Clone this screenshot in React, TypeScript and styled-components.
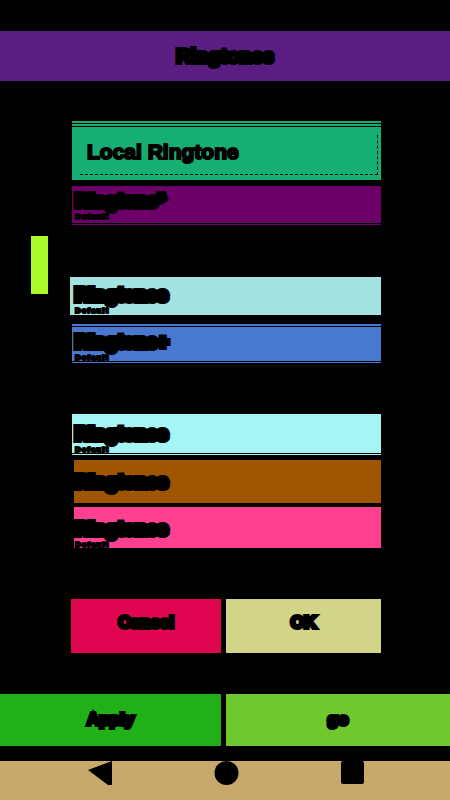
import styled, { createGlobalStyle } from 'styled-components';

const GlobalStyle = createGlobalStyle`
  html, body {
    margin: 0;
    padding: 0;
    background: #000;
  }
  body {
    font-family: 'Liberation Sans', Arial, sans-serif;
    color: #000;
  }
`;

const App = () => {
  return (
    <Page>
      <GlobalStyle />
      <Header>Ringtones</Header>

      <Body>
        <Rail>
          <RailThumb />
        </Rail>

        <Form>
          <HeroRow>Local Ringtone</HeroRow>
          <Row $bg="#6c0068" $height={37} $gap={54} $top={4} $lineBelow>
            <RowTitle>Ringtone*</RowTitle>
            <RowNote>Default</RowNote>
          </Row>

          <Row $bg="#a4e2e2" $height={38} $gap={12} $top={7} $left={-2}>
            <RowTitle>Ringtones</RowTitle>
            <RowNote>Default</RowNote>
          </Row>
          <Row $bg="#4878d0" $height={34} $gap={53} $top={4} $lineAbove $lineBelow>
            <RowTitle>Ringtone+</RowTitle>
            <RowNote>Default</RowNote>
          </Row>

          <Row $bg="#a5f5f5" $height={39} $gap={7} $top={9} $lineBelow>
            <RowTitle>Ringtones</RowTitle>
            <RowNote>Default</RowNote>
          </Row>
          <Row $bg="#a05500" $height={43} $gap={4} $top={11} $left={2}>
            <RowTitle>Ringtones</RowTitle>
          </Row>
          <Row $bg="#ff4091" $height={41} $gap={51} $top={11} $left={2}>
            <RowTitle>Ringtones</RowTitle>
            <RowNote>Default</RowNote>
          </Row>

          <ButtonRow>
            <ActionButton $bg="#df0550">Cancel</ActionButton>
            <ActionButton $bg="#d2d487">OK</ActionButton>
          </ButtonRow>
        </Form>
      </Body>

      <FooterRow>
        <FooterButton $bg="#20b018">Apply</FooterButton>
        <FooterButton $bg="#70c82e">go</FooterButton>
      </FooterRow>

      <NavBar>
        <svg width="24" height="24" viewBox="0 0 24 24">
          <path d="M0 9 L24 0 V24 L20 24 Z" fill="#000" />
        </svg>
        <svg width="25" height="24" viewBox="0 0 25 24">
          <circle cx="12.5" cy="12" r="12" fill="#000" />
        </svg>
        <svg width="23" height="23" viewBox="0 0 23 23">
          <rect width="23" height="23" rx="2" fill="#000" />
        </svg>
      </NavBar>
    </Page>
  );
};

export default App;

const Page = styled.div`
  width: 450px;
  height: 800px;
  padding-top: 31px;
  box-sizing: border-box;
  background: #000;
  overflow: hidden;
`;

const Header = styled.div`
  height: 50px;
  padding-top: 1px;
  box-sizing: border-box;
  background: #5a1e82;
  font-size: 20px;
  font-weight: 700;
  -webkit-text-stroke: 4px #000;
  display: flex;
  align-items: center;
  justify-content: center;
`;

const Body = styled.div`
  padding-top: 46px;
  display: flex;
`;

const Rail = styled.div`
  width: 72px;
  padding: 109px 0 0 31px;
  box-sizing: border-box;
`;

const RailThumb = styled.div`
  width: 17px;
  height: 58px;
  background: #abfa2b;
`;

const Form = styled.div`
  width: 309px;
  display: flex;
  flex-direction: column;
`;

const HeroRow = styled.div`
  position: relative;
  height: 53px;
  margin-bottom: 6px;
  padding: 0 0 4px 15px;
  box-sizing: border-box;
  background: #17ae73;
  box-shadow: 0 -1px 0 #000, 0 -3px 0 #17ae73, 0 -4px 0 #000, 0 -6px 0 #17ae73;
  font-size: 21px;
  font-weight: 700;
  -webkit-text-stroke: 2px #000;
  display: flex;
  align-items: center;

  &::after {
    content: '';
    position: absolute;
    top: 8px;
    left: 8px;
    right: 3px;
    bottom: 5px;
    border-right: 1px dashed #000;
    border-bottom: 1px dashed #000;
  }
`;

const Row = styled.div<{ $bg: string; $height: number; $gap: number; $top: number; $left?: number; $lineAbove?: boolean; $lineBelow?: boolean }>`
  height: ${({ $height }) => $height}px;
  margin-bottom: ${({ $gap }) => $gap}px;
  margin-left: ${({ $left = 0 }) => $left}px;
  padding: ${({ $top }) => $top}px 0 0 ${({ $left = 0 }) => 3 - $left}px;
  box-sizing: border-box;
  background: ${({ $bg }) => $bg};
  box-shadow: ${({ $bg, $lineAbove, $lineBelow }) =>
    [
      $lineAbove ? `0 -1px 0 #000, 0 -3px 0 ${$bg}` : '',
      $lineBelow ? `0 1px 0 #000, 0 2px 0 ${$bg}` : '',
    ]
      .filter(Boolean)
      .join(', ') || 'none'};
`;

const RowTitle = styled.div`
  font-size: 19px;
  font-weight: 700;
  line-height: 22px;
  -webkit-text-stroke: 6px #000;
`;

const RowNote = styled.div`
  width: 40px;
  font-size: 8px;
  font-weight: 700;
  line-height: 10px;
  letter-spacing: 1px;
  -webkit-text-stroke: 2px #000;
`;

const ButtonRow = styled.div`
  height: 54px;
  margin-left: -1px;
  display: grid;
  grid-template-columns: 150px 155px;
  gap: 5px;
`;

const ActionButton = styled.div<{ $bg: string }>`
  padding-bottom: 6px;
  box-sizing: border-box;
  background: ${({ $bg }) => $bg};
  font-size: 17px;
  font-weight: 700;
  -webkit-text-stroke: 4px #000;
  display: flex;
  align-items: center;
  justify-content: center;
`;

const FooterRow = styled.div`
  height: 52px;
  margin-top: 41px;
  display: grid;
  grid-template-columns: 221px 224px;
  gap: 5px;
`;

const FooterButton = styled(ActionButton)`
  padding-bottom: 0;
`;

const NavBar = styled.div`
  height: 39px;
  margin-top: 15px;
  padding: 0 86px 0 88px;
  background: #c6a96b;
  display: flex;
  align-items: flex-start;
  justify-content: space-between;
`;
